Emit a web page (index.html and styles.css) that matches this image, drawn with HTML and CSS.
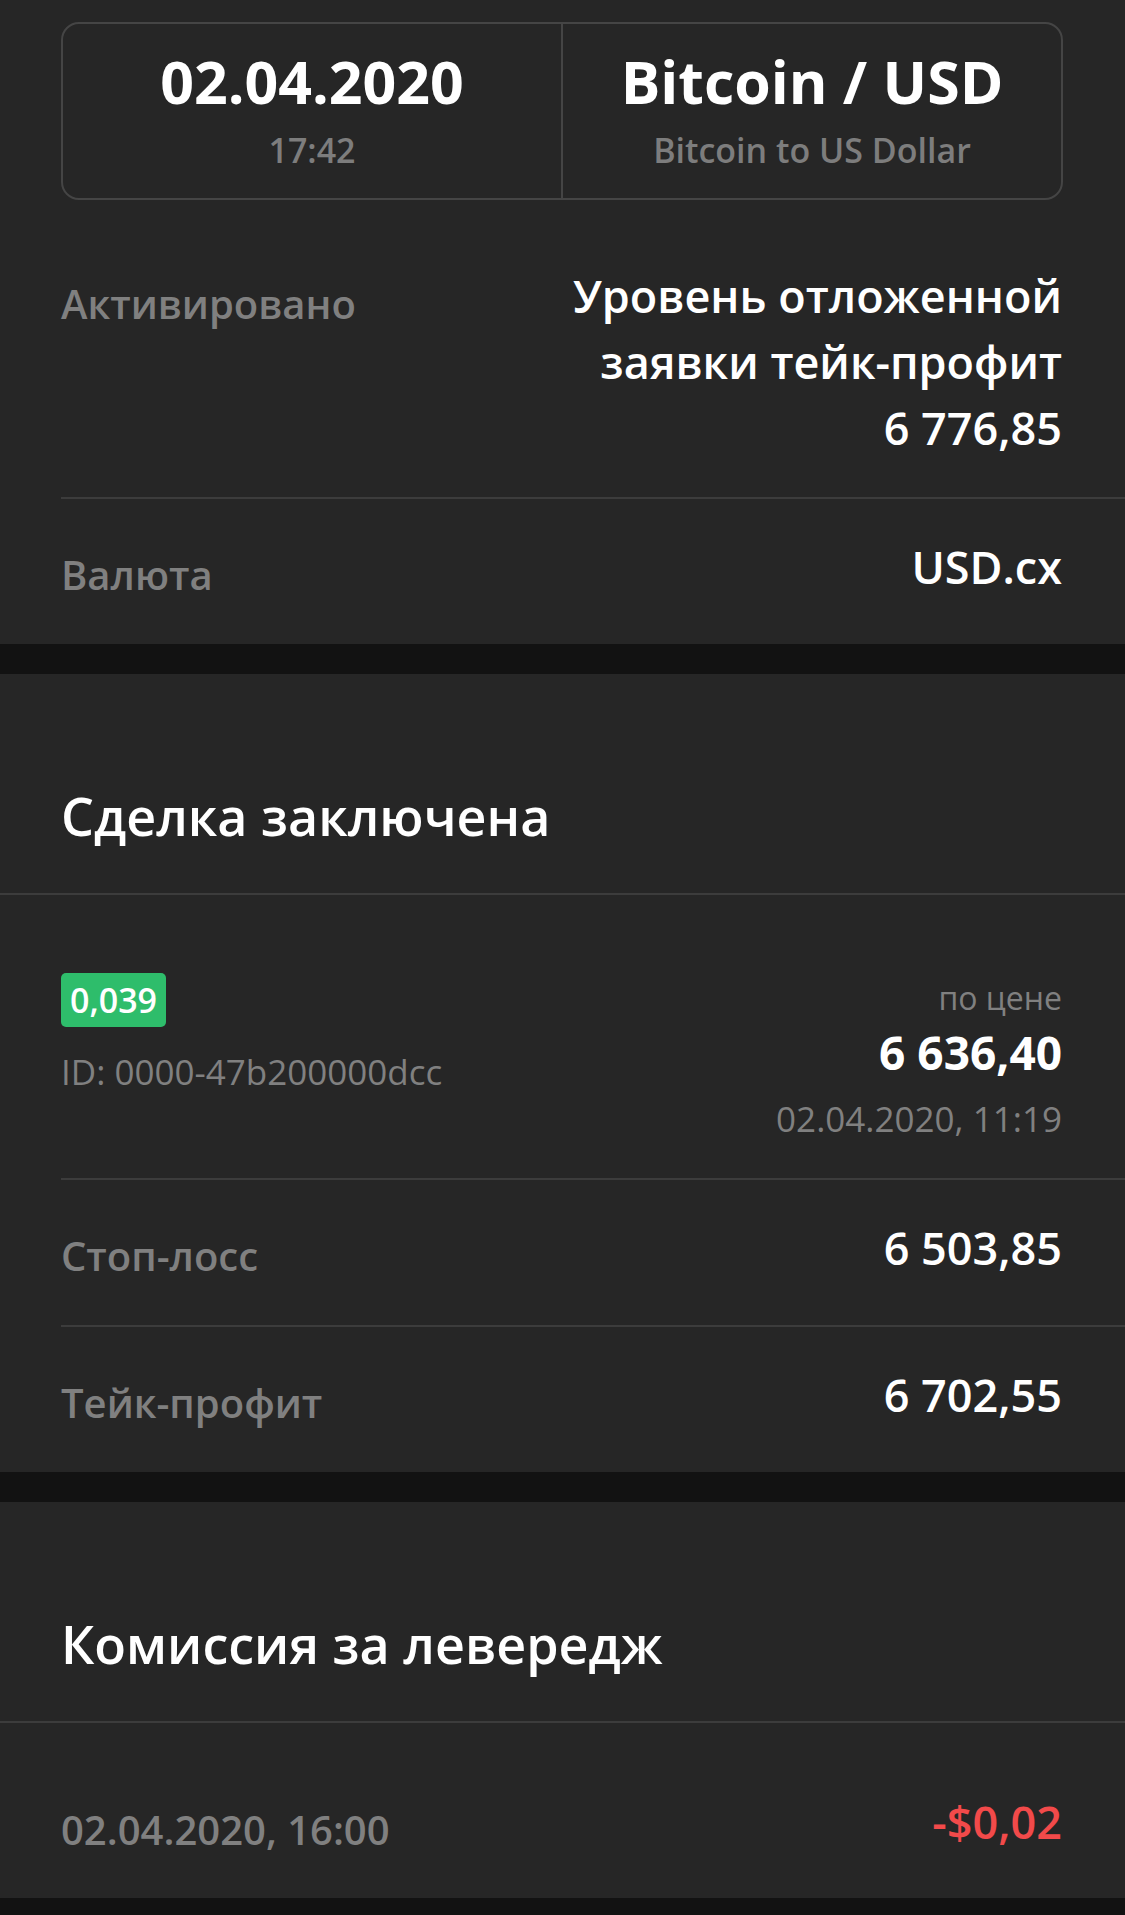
FILE: index.html
```html
<!DOCTYPE html>
<html lang="ru">
<head>
    <meta charset="UTF-8">
    <meta name="viewport" content="width=device-width, initial-scale=1.0">
    <title>Детали сделки</title>
    <link rel="stylesheet" href="styles.css">
</head>
<body>

<section class="panel panel-first">
    <div class="summary">
        <div class="summary-cell">
            <div class="summary-main">02.04.2020</div>
            <div class="summary-sub">17:42</div>
        </div>
        <div class="summary-cell">
            <div class="summary-main">Bitcoin / USD</div>
            <div class="summary-sub">Bitcoin to US Dollar</div>
        </div>
    </div>
    <div class="rows">
        <div class="row row-multi">
            <div class="row-label">Активировано</div>
            <div class="row-value">Уровень отложенной<br>заявки тейк-профит<br>6 776,85</div>
        </div>
        <div class="row">
            <div class="row-label">Валюта</div>
            <div class="row-value">USD.cx</div>
        </div>
    </div>
</section>

<section class="panel">
    <h2 class="panel-title">Сделка заключена</h2>
    <div class="rows">
        <div class="row row-deal">
            <div class="deal-left">
                <span class="badge">0,039</span>
                <div class="deal-id">ID: 0000-47b200000dcc</div>
            </div>
            <div class="deal-right">
                <div class="deal-caption">по цене</div>
                <div class="deal-price">6 636,40</div>
                <div class="deal-date">02.04.2020, 11:19</div>
            </div>
        </div>
        <div class="row">
            <div class="row-label">Стоп-лосс</div>
            <div class="row-value">6 503,85</div>
        </div>
        <div class="row">
            <div class="row-label">Тейк-профит</div>
            <div class="row-value">6 702,55</div>
        </div>
    </div>
</section>

<section class="panel">
    <h2 class="panel-title">Комиссия за левередж</h2>
    <div class="rows">
        <div class="row row-fee">
            <div class="row-label">02.04.2020, 16:00</div>
            <div class="row-value negative">-$0,02</div>
        </div>
    </div>
</section>

</body>
</html>
```

FILE: styles.css
```css
body {
    margin: 0;
    font-family: "Open Sans", "Noto Sans", sans-serif;
    background-color: #121212;
    color: #ffffff;
}
.panel {
    background-color: #262626;
    margin-bottom: 30px;
}
.panel-first {
    padding-top: 22px;
}
.summary {
    display: flex;
    margin: 0 62px 28px 61px;
    border: 2px solid #454545;
    border-radius: 18px;
}
.summary-cell {
    flex: 1;
    text-align: center;
    padding: 22px 0 23px;
}
.summary-cell + .summary-cell {
    border-left: 2px solid #454545;
}
.summary-main {
    font-size: 59px;
    font-weight: 700;
    line-height: 70px;
}
.summary-sub {
    margin-top: 9px;
    font-size: 34px;
    font-weight: 600;
    line-height: 50px;
    color: #7d7d7d;
}
.rows {
    padding-left: 61px;
}
.row {
    display: flex;
    justify-content: space-between;
    align-items: flex-start;
    padding: 35px 63px 44px 0;
    border-top: 2px solid #3c3c3c;
}
.row:first-child {
    border-top: none;
}
.row-multi {
    padding-bottom: 36px;
}
.row-label {
    margin-top: 17px;
    font-size: 40px;
    font-weight: 600;
    line-height: 48px;
    color: #808080;
}
.row-value {
    font-size: 45px;
    font-weight: 600;
    line-height: 66px;
    text-align: right;
}
.negative {
    color: #f24a4a;
}
.panel-title {
    margin: 0;
    padding: 112px 0 47px 61px;
    font-size: 52px;
    font-weight: 600;
    line-height: 60px;
    border-bottom: 2px solid #3c3c3c;
}
.row-deal {
    padding-top: 78px;
    padding-bottom: 24px;
}
.badge {
    display: inline-block;
    padding: 0 9px;
    height: 54px;
    line-height: 54px;
    font-size: 34px;
    font-weight: 600;
    border-radius: 5px;
    background-color: #2ebd6b;
    color: #ffffff;
}
.deal-id {
    margin-top: 20px;
    font-size: 35px;
    line-height: 50px;
    color: #808080;
}
.deal-right {
    text-align: right;
}
.deal-caption {
    margin-top: 3px;
    font-size: 32px;
    line-height: 44px;
    color: #808080;
}
.deal-price {
    font-size: 46px;
    font-weight: 700;
    line-height: 64px;
}
.deal-date {
    font-size: 35px;
    line-height: 70px;
    color: #808080;
}
.row-fee {
    padding-top: 66px;
    padding-bottom: 43px;
}
```
